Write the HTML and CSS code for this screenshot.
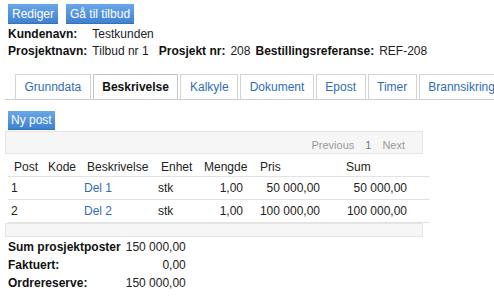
FILE: index.html
```html
<!DOCTYPE html>
<html lang="no">
<head>
<meta charset="utf-8">
<title>Beskrivelse</title>
<link rel="stylesheet" href="styles.css">
</head>
<body>
<div class="page">
  <div class="actions">
    <a class="btn" href="#">Rediger</a>
    <a class="btn" href="#">Gå til tilbud</a>
  </div>

  <div class="info">
    <b>Kundenavn:</b><span>Testkunden</span>
    <b class="row-start">Prosjektnavn:</b><span>Tilbud nr 1</span>
    <b>Prosjekt nr:</b><span>208</span>
    <b>Bestillingsreferanse:</b><span>REF-208</span>
  </div>

  <ul class="tabs">
    <li class="tab"><a href="#">Grunndata</a></li>
    <li class="tab active"><a href="#">Beskrivelse</a></li>
    <li class="tab"><a href="#">Kalkyle</a></li>
    <li class="tab"><a href="#">Dokument</a></li>
    <li class="tab"><a href="#">Epost</a></li>
    <li class="tab"><a href="#">Timer</a></li>
    <li class="tab"><a href="#">Brannsikring</a></li>
  </ul>

  <div class="panel">
    <a class="btn btn-new" href="#">Ny post</a>

    <div class="dt">
      <div class="dt-top">
        <span class="pg disabled">Previous</span>
        <span class="pg current">1</span>
        <span class="pg disabled">Next</span>
      </div>
      <table class="grid">
        <colgroup>
          <col class="c-post"><col class="c-kode"><col class="c-besk"><col class="c-enh"><col class="c-mengde"><col class="c-pris"><col class="c-sum">
        </colgroup>
        <thead>
          <tr><th>Post</th><th>Kode</th><th>Beskrivelse</th><th>Enhet</th><th>Mengde</th><th>Pris</th><th>Sum</th></tr>
        </thead>
        <tbody>
          <tr><td>1</td><td></td><td><a href="#">Del 1</a></td><td>stk</td><td class="num n-mengde">1,00</td><td class="num n-pris">50 000,00</td><td class="num n-sum">50 000,00</td></tr>
          <tr><td>2</td><td></td><td><a href="#">Del 2</a></td><td>stk</td><td class="num n-mengde">1,00</td><td class="num n-pris">100 000,00</td><td class="num n-sum">100 000,00</td></tr>
        </tbody>
      </table>
      <div class="dt-bottom"></div>
    </div>

    <div class="summary">
      <b>Sum prosjektposter</b><span>150 000,00</span>
      <b>Faktuert:</b><span>0,00</span>
      <b>Ordrereserve:</b><span>150 000,00</span>
    </div>
  </div>
</div>
</body>
</html>
```

FILE: styles.css
```css
html, body {
  margin: 0;
  padding: 0;
  background: #fff;
}
body {
  font-family: "Liberation Sans", Arial, sans-serif;
  font-size: 12px;
  color: #222;
}
a { text-decoration: none; }

.page {
  padding: 4px 0 0 5px;
}

.actions {
  display: flex;
  gap: 8px;
  margin-left: 3px;
}
.btn {
  display: inline-block;
  height: 20px;
  line-height: 20px;
  padding: 0 4px;
  color: #fff;
  background: linear-gradient(#6aa7ea, #3d7fd0);
  box-shadow: inset 0 -1px 0 rgba(0,0,0,0.12);
}

.info {
  display: grid;
  grid-template-columns: repeat(6, auto);
  justify-content: start;
  column-gap: 5px;
  line-height: 17px;
  margin: 2px 0 0 3px;
}
.info b { color: #111; }
.info .row-start { grid-column: 1; }

.tabs {
  list-style: none;
  margin: 14px 0 0 0;
  padding: 0 0 0 10px;
  display: flex;
  gap: 2px;
  border-bottom: 1px solid #cfcfcf;
  height: 25px;
  white-space: nowrap;
  overflow: hidden;
}
.tab {
  flex: none;
  border: 1px solid #d4d4d4;
  border-bottom: none;
  background: #fff;
  height: 25px;
  line-height: 24px;
  padding: 0 8.5px;
}
.tab a { color: #2f6db5; }
.tab.active {
  height: 26px;
  border-color: #c4c4c4;
}
.tab.active a {
  color: #111;
  font-weight: bold;
}

.panel {
  padding-top: 11px;
}
.btn-new {
  margin-left: 3px;
  height: 19px;
  line-height: 19px;
  padding: 0 3px;
}

.dt {
  margin-top: 1px;
}
.dt-top {
  box-sizing: border-box;
  width: 418px;
  height: 23px;
  background: #f6f6f6;
  border: 1px solid #e6e6e6;
  display: flex;
  justify-content: flex-end;
  align-items: flex-start;
  padding: 7px 17px 0 0;
  font-size: 11px;
  line-height: 13px;
  gap: 11px;
}
.pg.disabled { color: #9a9a9a; }
.pg.current { color: #777; }

.grid {
  margin-left: 3px;
  width: 422px;
  table-layout: fixed;
  border-collapse: collapse;
}
.c-post { width: 34px; }
.c-kode { width: 39px; }
.c-besk { width: 74px; }
.c-enh { width: 43px; }
.c-mengde { width: 56px; }
.c-pris { width: 86px; }
.c-sum { width: 90px; }

.grid th {
  font-weight: normal;
  text-align: left;
  color: #222;
  height: 22px;
  padding: 4px 0 0 6px;
  box-sizing: border-box;
  line-height: 14px;
  border-bottom: 1px solid #e2e2e2;
  white-space: nowrap;
}
.grid td {
  height: 22px;
  padding: 0 0 0 3px;
  line-height: 14px;
  border-bottom: 1px solid #e2e2e2;
  white-space: nowrap;
}
.grid td a { color: #2f6db5; }
.grid td.num { text-align: right; }
.grid td.n-mengde { padding-right: 11px; }
.grid td.n-pris { padding-right: 20px; }
.grid td.n-sum { padding-right: 23px; }

.dt-bottom {
  box-sizing: border-box;
  width: 418px;
  height: 14px;
  background: #f6f6f6;
  border: 1px solid #e6e6e6;
}

.summary {
  display: grid;
  grid-template-columns: auto auto;
  justify-content: start;
  column-gap: 5px;
  line-height: 18px;
  margin: 1px 0 0 3px;
}
.summary b { color: #111; }
.summary span { text-align: right; }
```
